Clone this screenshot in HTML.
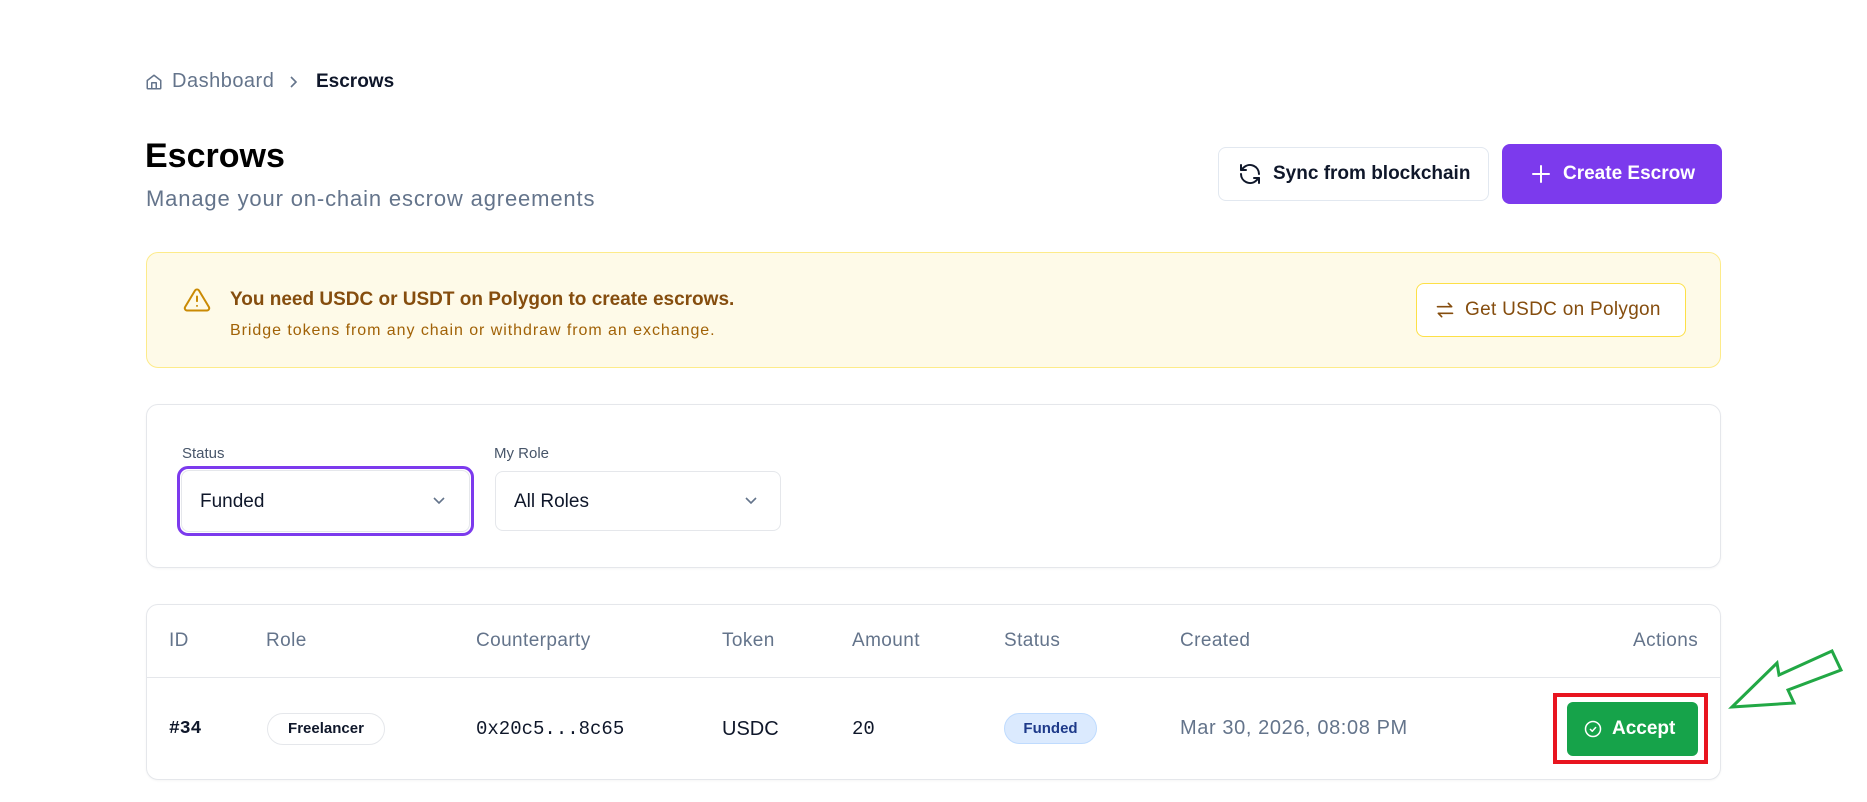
<!DOCTYPE html>
<html><head><meta charset="utf-8"><style>
*{box-sizing:border-box;margin:0;padding:0}
body{width:1867px;height:802px;background:#fff;font-family:"Liberation Sans",sans-serif;position:relative;overflow:hidden;color:#0f172a}
.a{position:absolute;white-space:nowrap}
.card{position:absolute;left:146px;width:1575px;border:1px solid #e5e7eb;border-radius:12px;background:#fff;box-shadow:0 1px 2px rgba(0,0,0,.04)}
.th{position:absolute;top:630px;font-size:19px;color:#64748b;letter-spacing:.4px}
.mono{font-family:"Liberation Mono",monospace}
</style></head><body>
<svg class="a" style="left:145px;top:73px" width="18" height="18" viewBox="0 0 24 24" fill="none" stroke="#64748b" stroke-width="2" stroke-linecap="round" stroke-linejoin="round"><path d="M3 10l9-7 9 7v10a1 1 0 0 1-1 1H4a1 1 0 0 1-1-1z"/><path d="M9 21v-8h6v8"/></svg>
<div class="a" style="left:172px;top:70px;font-size:20px;color:#64748b;letter-spacing:.5px">Dashboard</div>
<svg class="a" style="left:287px;top:75px" width="12" height="14" viewBox="0 0 12 14" fill="none" stroke="#64748b" stroke-width="1.6"><path d="M4 2l5 5-5 5"/></svg>
<div class="a" style="left:316px;top:71px;font-size:19px;font-weight:bold;color:#0f172a">Escrows</div>
<div class="a" style="left:145px;top:137px;font-size:34px;font-weight:bold;color:#000">Escrows</div>
<div class="a" style="left:146px;top:186px;font-size:22px;color:#64748b;letter-spacing:.85px">Manage your on-chain escrow agreements</div>

<div class="a" style="left:1218px;top:147px;width:271px;height:54px;border:1px solid #e2e8f0;border-radius:8px;background:#fff"></div>
<svg class="a" style="left:1238px;top:162px" width="24" height="24" viewBox="0 0 24 24" fill="none" stroke="#0f172a" stroke-width="2" stroke-linecap="round" stroke-linejoin="round"><path d="M21 12a9 9 0 0 0-15-6.7L3 8"/><path d="M3 3v5h5"/><path d="M3 12a9 9 0 0 0 15 6.7l3-2.7"/><path d="M16 16h5v5"/></svg>
<div class="a" style="left:1273px;top:163px;font-size:19px;font-weight:bold;color:#0f172a">Sync from blockchain</div>
<div class="a" style="left:1502px;top:144px;width:220px;height:60px;border-radius:8px;background:#7c3aed"></div>
<svg class="a" style="left:1531px;top:164px" width="20" height="20" viewBox="0 0 20 20" stroke="#fff" stroke-width="2" stroke-linecap="round"><path d="M10 2v16M2 10h16"/></svg>
<div class="a" style="left:1563px;top:163px;font-size:19px;font-weight:bold;color:#fff">Create Escrow</div>

<div class="a" style="left:146px;top:252px;width:1575px;height:116px;background:#fefae8;border:1px solid #fdeb8a;border-radius:12px"></div>
<svg class="a" style="left:182px;top:286px" width="30" height="28" viewBox="0 0 24 24" fill="none" stroke="#ca8a04" stroke-width="1.7" stroke-linecap="round" stroke-linejoin="round"><path d="M10.3 3.9L1.8 18a2 2 0 0 0 1.7 3h17a2 2 0 0 0 1.7-3L13.7 3.9a2 2 0 0 0-3.4 0z"/><path d="M12 9v4M12 17h.01"/></svg>
<div class="a" style="left:230px;top:289px;font-size:19px;font-weight:bold;color:#854d0e">You need USDC or USDT on Polygon to create escrows.</div>
<div class="a" style="left:230px;top:322px;font-size:16px;color:#a16207;letter-spacing:.95px">Bridge tokens from any chain or withdraw from an exchange.</div>
<div class="a" style="left:1416px;top:283px;width:270px;height:54px;background:#fff;border:1px solid #fde047;border-radius:8px"></div>
<svg class="a" style="left:1435px;top:300px" width="20" height="20" viewBox="0 0 24 24" fill="none" stroke="#854d0e" stroke-width="2" stroke-linecap="round" stroke-linejoin="round"><path d="M3 8h17l-4-4"/><path d="M21 16H4l4 4"/></svg>
<div class="a" style="left:1465px;top:299px;font-size:19px;color:#854d0e;font-weight:500;letter-spacing:.3px">Get USDC on Polygon</div>

<div class="card" style="top:404px;height:164px"></div>
<div class="a" style="left:182px;top:445px;font-size:15px;color:#475569">Status</div>
<div class="a" style="left:177px;top:466px;width:297px;height:70px;border:3px solid #7c3aed;border-radius:11px"></div>
<div class="a" style="left:181px;top:470px;width:289px;height:62px;border:1px solid #e5e7eb;border-radius:8px"></div>
<div class="a" style="left:200px;top:491px;font-size:19px;color:#0f172a">Funded</div>
<svg class="a" style="left:432px;top:496px" width="14" height="10" viewBox="0 0 14 10" fill="none" stroke="#64748b" stroke-width="1.6"><path d="M2 2l5 5 5-5"/></svg>
<div class="a" style="left:494px;top:445px;font-size:15px;color:#475569">My Role</div>
<div class="a" style="left:495px;top:471px;width:286px;height:60px;border:1px solid #e5e7eb;border-radius:8px"></div>
<div class="a" style="left:514px;top:491px;font-size:19px;color:#0f172a">All Roles</div>
<svg class="a" style="left:744px;top:496px" width="14" height="10" viewBox="0 0 14 10" fill="none" stroke="#64748b" stroke-width="1.6"><path d="M2 2l5 5 5-5"/></svg>

<div class="card" style="top:604px;height:176px"></div>
<div class="a" style="left:147px;top:677px;width:1573px;height:1px;background:#e5e7eb"></div>
<div class="th" style="left:169px">ID</div>
<div class="th" style="left:266px">Role</div>
<div class="th" style="left:476px">Counterparty</div>
<div class="th" style="left:722px">Token</div>
<div class="th" style="left:852px">Amount</div>
<div class="th" style="left:1004px">Status</div>
<div class="th" style="left:1180px">Created</div>
<div class="th" style="left:1633px">Actions</div>

<div class="a mono" style="left:169px;top:719px;font-size:18px;font-weight:bold">#34</div>
<div class="a" style="left:267px;top:713px;width:118px;height:32px;border:1px solid #e5e7eb;border-radius:16px;font-size:15px;font-weight:bold;text-align:center;line-height:30px">Freelancer</div>
<div class="a mono" style="left:476px;top:718px;font-size:19px">0x20c5...8c65</div>
<div class="a" style="left:722px;top:718px;font-size:20px">USDC</div>
<div class="a mono" style="left:852px;top:718px;font-size:19px">20</div>
<div class="a" style="left:1004px;top:713px;width:93px;height:31px;background:#dbeafe;border:1px solid #bfdbfe;border-radius:16px;font-size:15px;font-weight:bold;color:#1e3a8a;text-align:center;line-height:29px">Funded</div>
<div class="a" style="left:1180px;top:717px;font-size:20px;color:#64748b;letter-spacing:.6px">Mar 30, 2026, 08:08 PM</div>

<div class="a" style="left:1553px;top:693px;width:155px;height:71px;border:4px solid #e8151f"></div>
<div class="a" style="left:1567px;top:702px;width:131px;height:54px;background:#16a34a;border-radius:6px"></div>
<svg class="a" style="left:1584px;top:720px" width="18" height="18" viewBox="0 0 24 24" fill="none" stroke="#fff" stroke-width="2" stroke-linecap="round" stroke-linejoin="round"><circle cx="12" cy="12" r="10"/><path d="M8.5 12.5l2.5 2.5 4.5-5"/></svg>
<div class="a" style="left:1612px;top:718px;font-size:19px;font-weight:bold;color:#fff">Accept</div>

<svg class="a" style="left:0;top:0" width="1867" height="802"><polygon points="1732,707 1777,663 1779,675 1832,651 1841,670 1788,690 1794,703" fill="none" stroke="#22a845" stroke-width="3" stroke-linejoin="miter"/></svg>
</body></html>
